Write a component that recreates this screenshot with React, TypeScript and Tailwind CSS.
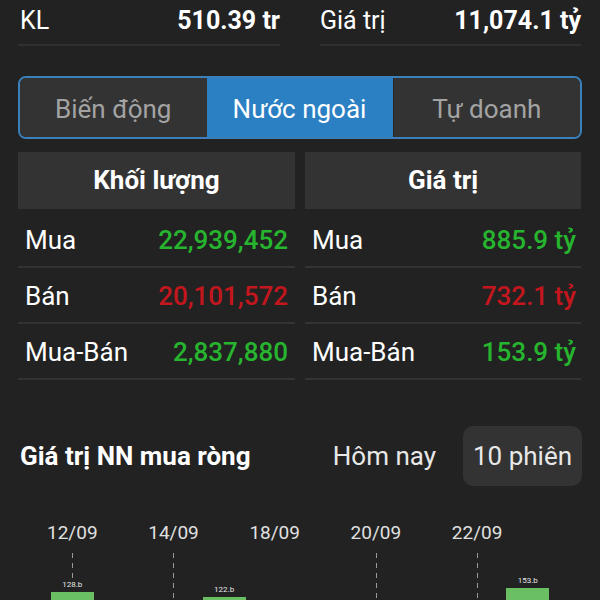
import React from 'react';

const bars: Record<number, { label: string; top: number }> = {
  0: { label: '128.b', top: 39 },
  3: { label: '122.b', top: 44 },
  9: { label: '153.b', top: 35 },
};
const dates: Record<number, string> = { 0: '12/09', 2: '14/09', 4: '18/09', 6: '20/09', 8: '22/09' };
const dashed = [0, 2, 6, 8];

const rows = [
  { label: 'Mua', vol: '22,939,452', val: '885.9 tỷ', color: 'text-[#27b52f]' },
  { label: 'Bán', vol: '20,101,572', val: '732.1 tỷ', color: 'text-[#c3161d]' },
  { label: 'Mua-Bán', vol: '2,837,880', val: '153.9 tỷ', color: 'text-[#27b52f]' },
];

const App = () => {
  return (
    <div className="w-[600px] h-[600px] overflow-hidden bg-[#222222] text-white font-['Roboto',sans-serif]">
      {/* Summary */}
      <div className="flex gap-[40px] px-[18px]">
        <div className="w-[262px] h-[46px] flex items-center justify-between pb-[3px] pl-[2px] border-b-2 border-[#303030] text-[25px]">
          <span>KL</span>
          <span className="font-bold">510.39 tr</span>
        </div>
        <div className="w-[261px] h-[46px] flex items-center justify-between pb-[3px] border-b-2 border-[#303030] text-[25px]">
          <span>Giá trị</span>
          <span className="font-bold">11,074.1 tỷ</span>
        </div>
      </div>

      {/* Tabs */}
      <div className="mx-[18px] mt-[30px] h-[63px] flex rounded-[8px] border-2 border-[#3b80bb] overflow-hidden text-[26px]">
        <div className="flex-1 flex items-center justify-center pt-[3px] bg-[#333333] text-[#a3a3a3]">Biến động</div>
        <div className="w-[186px] flex items-center justify-center pt-[3px] bg-[#2b80c3] text-white">Nước ngoài</div>
        <div className="flex-1 flex items-center justify-center pt-[3px] bg-[#333333] text-[#a3a3a3] border-l border-[#262626]">Tự doanh</div>
      </div>

      {/* Table */}
      <div className="flex gap-[10px] px-[18px] mt-[13px]">
        <div className="w-[277px]">
          <div className="h-[57px] flex items-center justify-center bg-[#333333] font-bold text-[26px]">Khối lượng</div>
          <div className="mt-[3px]">
            {rows.map(r => (
              <div key={r.label} className="h-[56px] flex items-center justify-between pt-[2px] pl-[7px] pr-[7px] border-b-2 border-[#333333] text-[26px]">
                <span>{r.label}</span>
                <span className={`font-medium ${r.color}`}>{r.vol}</span>
              </div>
            ))}
          </div>
        </div>
        <div className="w-[276px]">
          <div className="h-[57px] flex items-center justify-center bg-[#333333] font-bold text-[26px]">Giá trị</div>
          <div className="mt-[3px]">
            {rows.map(r => (
              <div key={r.label} className="h-[56px] flex items-center justify-between pt-[2px] pl-[7px] pr-[5px] border-b-2 border-[#333333] text-[26px]">
                <span>{r.label}</span>
                <span className={`font-medium ${r.color}`}>{r.val}</span>
              </div>
            ))}
          </div>
        </div>
      </div>

      {/* NN net buy */}
      <div className="mt-[46px] px-[18px] flex items-center justify-between">
        <span className="pl-[2px] font-bold text-[26px]">Giá trị NN mua ròng</span>
        <div className="flex items-center text-[26px] text-[#e8e8e8]">
          <span className="px-[11px]">Hôm nay</span>
          <span className="ml-[16px] h-[60px] w-[119px] flex items-center justify-center rounded-[10px] bg-[#333333]">10 phiên</span>
        </div>
      </div>

      {/* Chart */}
      <div className="mt-[35px] ml-[47px] w-[506px] grid grid-cols-10">
        {Array.from({ length: 10 }).map((_, i) => (
          <div key={i} className="flex flex-col items-center">
            <div className="h-[24px] whitespace-nowrap text-[19px] leading-[24px] text-[#e0e0e0]">{dates[i] ?? ''}</div>
            <div className="relative mt-[8px] h-[80px] w-full flex justify-center">
              {dashed.includes(i) && (
                <div className="absolute top-0 bottom-0 left-1/2 w-px bg-[repeating-linear-gradient(to_bottom,#9a9a9a_0_5px,transparent_5px_10px)]" />
              )}
              {bars[i] && (
                <div className="relative flex flex-col items-center" style={{ marginTop: bars[i].top - 14 }}>
                  <span className="h-[14px] text-[8px] leading-[14px] text-[#e8e8e8] bg-[#222222] px-[1px]">{bars[i].label}</span>
                  <div className="w-[43px] h-[40px] bg-[#6abf62]" />
                </div>
              )}
            </div>
          </div>
        ))}
      </div>
    </div>
  );
};

export default App;
